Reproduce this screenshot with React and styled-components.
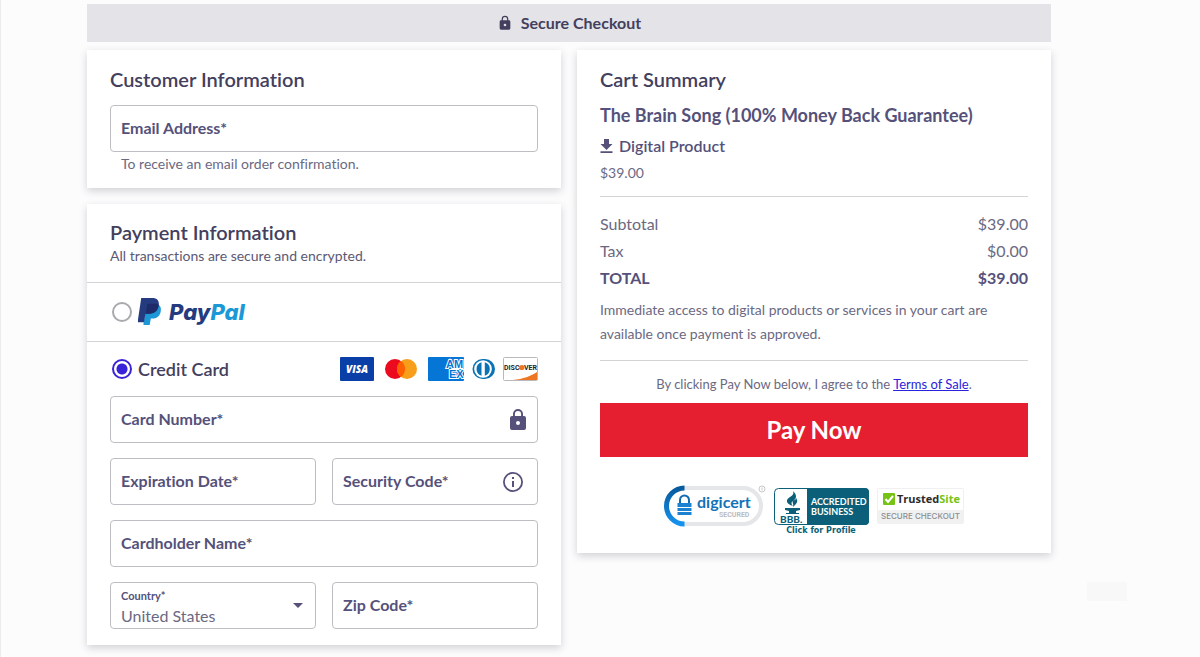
import React, { useState } from 'react';
import styled, { createGlobalStyle, css } from 'styled-components';

const ink = '#43405d';
const body = '#55517a';
const soft = '#6b6982';
const line = '#d4d4d6';
const outline = '#bdbdc2';

const GlobalStyle = createGlobalStyle`
  * { box-sizing: border-box; }
  body {
    margin: 0;
    background: #fcfcfd;
    border-left: 1px solid #ececee;
    color: ${body};
    font-family: Lato, 'Liberation Sans', sans-serif;
    font-size: 16px;
    font-variant-ligatures: none;
  }
  button, input, select { font: inherit; color: inherit; }
  h1, h2, h3, p, dl, dd, fieldset { margin: 0; padding: 0; border: 0; }
`;

const Page = styled.div`
  display: grid;
  grid-template-columns: minmax(0, 1fr);
  gap: 8px;
  padding: 4px 149px 12px 86px;

  @media (max-width: 900px) {
    padding: 4px 16px 12px;
  }
`;

const SecureBar = styled.header`
  display: flex;
  align-items: center;
  justify-content: center;
  gap: 8px;
  height: 38px;
  background: #e3e3e8;
  color: ${ink};

  h1 {
    font-size: 16px;
    line-height: 24px;
    font-weight: 700;
  }
`;

const Columns = styled.main`
  display: grid;
  grid-template-columns: repeat(2, minmax(0, 1fr));
  align-items: start;
  gap: 16px;

  @media (max-width: 760px) {
    grid-template-columns: minmax(0, 1fr);
  }
`;

const Stack = styled.div`
  display: grid;
  gap: 16px;
`;

const Card = styled.section`
  background: #fff;
  box-shadow: 0 3px 8px rgba(40, 40, 60, 0.2);
`;

const CardBody = styled.div`
  padding: ${(p) => p.$padding || '16px 23px'};
`;

const CardTitle = styled.h2`
  color: ${ink};
  font-size: 20px;
  line-height: 26px;
  font-weight: 600;
`;

const Subtitle = styled.p`
  color: #5b5973;
  font-size: 14px;
  line-height: 22px;
`;

const Helper = styled.p`
  margin-top: 1px;
  padding-left: 11px;
  color: ${soft};
  font-size: 14px;
  line-height: 22px;
`;

const Field = styled.div`
  position: relative;
  margin-top: ${(p) => (p.$first ? '13px' : '0')};
`;

const FieldLabel = styled.label`
  position: absolute;
  left: 11px;
  top: ${(p) => (p.$small ? '6px' : '11px')};
  color: ${body};
  font-size: ${(p) => (p.$small ? '11px' : '16px')};
  line-height: ${(p) => (p.$small ? '16px' : '24px')};
  font-weight: 700;
  pointer-events: none;
`;

const control = css`
  display: block;
  width: 100%;
  height: 47px;
  border: 1px solid ${outline};
  border-radius: 4px;
  background: #fff;
  outline-color: #3a22d8;
`;

const TextInput = styled.input`
  ${control}
  padding: 12px 10px;

  &:not(:placeholder-shown) + ${FieldLabel} {
    top: 2px;
    font-size: 11px;
    line-height: 16px;
  }
`;

const Select = styled.select`
  ${control}
  appearance: none;
  padding: 20px 32px 0 10px;
  color: ${soft};
  line-height: 24px;
`;

const FieldIcon = styled.span`
  position: absolute;
  right: ${(p) => p.$right};
  top: 0;
  height: 47px;
  display: flex;
  align-items: center;
  color: ${body};
  pointer-events: none;
`;

const MethodRow = styled.div`
  display: flex;
  align-items: center;
  gap: 6px;
  height: ${(p) => p.$height};
  padding: 0 23px 0 25px;
  border-top: 1px solid ${line};
`;

const MethodLabel = styled.label`
  display: flex;
  align-items: center;
  gap: 6px;
  color: ${ink};
  font-size: 18px;
  line-height: 24px;
  font-weight: 600;
`;

const Radio = styled.input`
  appearance: none;
  width: 20px;
  height: 20px;
  margin: 0;
  border: 2px solid #a9a9ae;
  border-radius: 50%;
  background: #fff;

  &:checked {
    border-color: #3a22d8;
    background: radial-gradient(circle, #3a22d8 5px, #fff 6px);
  }
`;

const CardLogos = styled.div`
  display: flex;
  align-items: center;
  gap: 8px;
  margin-left: auto;
`;

const Fields = styled.div`
  display: grid;
  grid-template-columns: repeat(2, minmax(0, 1fr));
  gap: 15px 16px;
  padding: 0 23px 16px;
`;

const Wide = styled.div`
  grid-column: 1 / -1;
`;

const ProductName = styled.h3`
  margin-top: 10px;
  font-size: 18px;
  line-height: 26px;
  font-weight: 700;
`;

const ProductKind = styled.p`
  display: flex;
  align-items: center;
  gap: 6px;
  margin-top: 6px;
  font-size: 16px;
  line-height: 24px;
  font-weight: 600;
`;

const Price = styled.p`
  margin-top: 3px;
  color: ${soft};
  font-size: 14px;
  line-height: 24px;
`;

const Totals = styled.dl`
  margin-top: 11px;
  padding-top: 13px;
  border-top: 1px solid ${line};
`;

const TotalRow = styled.div`
  display: flex;
  justify-content: space-between;
  color: ${(p) => (p.$strong ? body : soft)};
  font-size: 16px;
  line-height: 27px;
  font-weight: ${(p) => (p.$strong ? 700 : 400)};
`;

const Note = styled.p`
  margin-top: 7px;
  padding-bottom: 14px;
  border-bottom: 1px solid ${line};
  color: ${soft};
  font-size: 14px;
  line-height: 24px;
`;

const Terms = styled.p`
  margin-top: 13px;
  color: ${soft};
  font-size: 13px;
  line-height: 20px;
  text-align: center;

  a { color: #2a22dd; }
`;

const PayButton = styled.button`
  display: block;
  width: 100%;
  height: 54px;
  margin-top: 9px;
  border: 0;
  background: #e61f30;
  color: #fff;
  font-size: 24px;
  line-height: 32px;
  font-weight: 700;
  cursor: pointer;
`;

const Seals = styled.div`
  display: flex;
  justify-content: center;
  align-items: flex-start;
  gap: 8px;
  padding-top: 28px;
`;

const Mark = styled.svg`
  display: block;
  flex: none;
`;

const Ghost = styled.div`
  position: absolute;
  right: 73px;
  top: 582px;
  width: 40px;
  height: 19px;
  background: #f8f8f9;

  @media (max-width: 900px) {
    display: none;
  }
`;

const LockIcon = ({ size }) => (
  <Mark width={size} height={size} viewBox="0 0 24 24" fill="currentColor" aria-hidden="true">
    <path d="M18 8h-1V6A5 5 0 0 0 7 6v2H6a2 2 0 0 0-2 2v10a2 2 0 0 0 2 2h12a2 2 0 0 0 2-2V10a2 2 0 0 0-2-2Zm-6 9a2 2 0 1 1 0-4 2 2 0 0 1 0 4Zm3.100-9H8.900V6a3.100 3.100 0 0 1 6.200 0Z" />
  </Mark>
);

const InfoIcon = () => (
  <Mark width="24" height="24" viewBox="0 0 24 24" fill="currentColor" aria-hidden="true">
    <path d="M11 7h2v2h-2Zm0 4h2v6h-2Zm1-9a10 10 0 1 0 0 20 10 10 0 0 0 0-20Zm0 18.200a8.200 8.200 0 1 1 0-16.400 8.200 8.200 0 0 1 0 16.400Z" />
  </Mark>
);

const CaretIcon = () => (
  <Mark width="10" height="5" viewBox="0 0 10 5" fill="currentColor" aria-hidden="true">
    <path d="M0 0h10L5 5Z" />
  </Mark>
);

const DownloadIcon = () => (
  <Mark width="13" height="16" viewBox="0 0 13 16" fill="currentColor" aria-hidden="true">
    <path d="M4 1h5v5h3.500l-6 6-6-6H4ZM.5 13.200h12V15H.5Z" />
  </Mark>
);

const PayPalLogo = () => (
  <Mark width="113" height="30" viewBox="0 0 113 30" role="img" aria-label="PayPal">
    <path fill="#1d98d7" d="M8 8h13c2.100 1.700 2.300 4.500 1.500 7.400-1.200 4.300-4.100 6-8.200 6h-1.500l-1.100 6.600H5.400Z" />
    <path fill="#253b80" d="M3.200 1h10.600c5 0 7.700 2.200 6.900 7.400-.9 5.800-4.400 8.300-10.100 8.300H7.400L6 25.300H-.4Z" />
    <path fill="#1f2a68" d="M9.300 7.800c.1-.7.600-1 1.200-1h6.800c1.400 0 2.500.3 3.400.8-.5 5.700-4 9.100-10.100 9.100H7.700Z" />
    <text y="23" fontFamily="Inter, sans-serif" fontSize="22" fontWeight="800" fontStyle="italic">
      <tspan x="31" fill="#253b80">Pay</tspan>
      <tspan fill="#1d98d7">Pal</tspan>
    </text>
  </Mark>
);

const VisaLogo = () => (
  <Mark width="34" height="24" viewBox="0 0 34 24" role="img" aria-label="Visa">
    <rect width="34" height="24" rx="1" fill="#0b3fa8" />
    <text x="17" y="16" textAnchor="middle" fill="#fff" fontFamily="'Open Sans', sans-serif" fontSize="10" fontWeight="800" fontStyle="italic">VISA</text>
  </Mark>
);

const MastercardLogo = () => (
  <Mark width="38" height="24" viewBox="0 0 38 24" role="img" aria-label="Mastercard">
    <circle cx="13" cy="12" r="10" fill="#eb0a1e" />
    <circle cx="25" cy="12" r="10" fill="#f79e1b" />
    <path d="M19 4a10 10 0 0 1 0 16 10 10 0 0 1 0-16Z" fill="#ff5f00" />
  </Mark>
);

const AmexLogo = () => (
  <Mark width="36" height="24" viewBox="0 0 36 24" role="img" aria-label="American Express">
    <rect width="36" height="24" rx="1" fill="#0576d5" />
    <g fill="#0576d5" stroke="#fff" strokeWidth="2" paintOrder="stroke" fontFamily="'Liberation Sans', sans-serif" fontSize="11" fontWeight="700">
      <text x="18" y="11">AM</text>
      <text x="21" y="21">EX</text>
    </g>
  </Mark>
);

const DinersLogo = () => (
  <Mark width="23" height="24" viewBox="0 0 23 24" role="img" aria-label="Diners Club">
    <path d="M10.500 2h2.500a10 10 0 0 1 0 20h-2.500a10 10 0 0 1 0-20Z" fill="#0b72b5" />
    <circle cx="11" cy="12" r="8.800" fill="#fff" />
    <path d="M9.500 5.300a7 7 0 0 0 0 13.400ZM12.800 5.300a7 7 0 0 1 0 13.400Z" fill="#0b72b5" />
  </Mark>
);

const DiscoverLogo = () => (
  <Mark width="35" height="24" viewBox="0 0 35 24" role="img" aria-label="Discover">
    <rect x=".5" y=".5" width="34" height="23" rx="1" fill="#fff" stroke="#b9b9bd" />
    <path d="M34 15v8H10c10-1 18-4 24-8Z" fill="#ee7623" />
    <circle cx="18.800" cy="10.500" r="2.600" fill="#ee7623" />
    <g fill="#222" fontFamily="Roboto, sans-serif" fontSize="7" fontWeight="700">
      <text x="1" y="13">DISC</text>
      <text x="34" y="13" textAnchor="end">VER</text>
    </g>
  </Mark>
);

const DigicertSeal = () => (
  <Mark width="102" height="42" viewBox="0 0 102 42" role="img" aria-label="DigiCert Secured">
    <defs>
      <linearGradient id="arc" x1="0" y1="0" x2="0" y2="1">
        <stop offset="0" stopColor="#075b9c" />
        <stop offset="1" stopColor="#1592f0" />
      </linearGradient>
    </defs>
    <path d="M20 3h59a18 18 0 0 1 0 36H20" fill="none" stroke="#e4e6e9" strokeWidth="4" />
    <path d="M20.500 3a18 18 0 0 0 0 36" fill="none" stroke="url(#arc)" strokeWidth="5" />
    <path d="M16 18v-3a4.500 4.500 0 0 1 9 0v3" fill="none" stroke="#126cb0" strokeWidth="2" />
    <path d="M13.500 18h14v4h-14ZM13.500 23h14v3h-14ZM13.500 27h14v3h-14Z" fill="#1b82d2" />
    <text x="33" y="23" fill="#1472b8" fontFamily="Lato, sans-serif" fontSize="16" fontWeight="700">digicert</text>
    <text x="55" y="32" fill="#b9bcc0" fontFamily="Roboto, sans-serif" fontSize="7" fontWeight="700">SECURED</text>
    <circle cx="98" cy="4" r="3" fill="#fff" stroke="#c6c8cb" />
    <path d="M98 2.500v3" stroke="#c6c8cb" />
  </Mark>
);

const BbbSeal = () => (
  <Mark width="95" height="50" viewBox="0 0 95 50" role="img" aria-label="BBB Accredited Business, click for profile">
    <rect x=".5" y="3.500" width="94" height="36" rx="4" fill="#fff" stroke="#0c5f78" />
    <path d="M33 3h58a4 4 0 0 1 4 4v29a4 4 0 0 1-4 4H33Z" fill="#0c5f78" />
    <path d="M19 6c4 4 4 7 0 10-2 1-2 3 0 5-7-2-8-6-3-9 3-2 4-3 3-6ZM22 13c3 4 0 6-3 9 1-3-1-4 0-6 1-1 3-1 3-3ZM11 23h15v2l-4 1v2h3v1H12v-1h3v-2l-4-1Z" fill="#0c5f78" />
    <text x="6" y="38" fill="#0c5f78" fontFamily="Lato, sans-serif" fontSize="10" fontWeight="900">BBB.</text>
    <g fill="#fff" fontFamily="Lato, sans-serif" fontSize="9" fontWeight="700">
      <text x="37" y="20">ACCREDITED</text>
      <text x="37" y="30">BUSINESS</text>
    </g>
    <text x="47" y="48" textAnchor="middle" fill="#0c5f78" fontFamily="'DejaVu Sans', sans-serif" fontSize="8" fontWeight="700">Click for Profile</text>
  </Mark>
);

const TrustedSeal = () => (
  <Mark width="87" height="42" viewBox="0 0 87 42" role="img" aria-label="TrustedSite Secure Checkout">
    <rect x=".5" y="3.500" width="86" height="35" rx="1" fill="#fff" stroke="#f0f0f0" />
    <path d="M1 25h85v13H1Z" fill="#f1f1f1" />
    <rect x="6" y="8" width="12" height="12" rx="1" fill="#76c315" />
    <path d="m8.500 14 2.500 3 5-6" fill="none" stroke="#fff" strokeWidth="2" />
    <text x="20" y="18" fontFamily="'Open Sans', sans-serif" fontSize="11" fontWeight="700">
      <tspan fill="#2b2b2d">Trusted</tspan>
      <tspan fill="#76c315">Site</tspan>
    </text>
    <text x="4" y="34" fill="#8d8d90" fontFamily="Inter, sans-serif" fontSize="8" fontWeight="500">SECURE CHECKOUT</text>
  </Mark>
);

const TextField = ({ id, label, type = 'text', first, children }) => (
  <Field $first={first}>
    <TextInput id={id} type={type} placeholder=" " />
    <FieldLabel htmlFor={id}>{label}</FieldLabel>
    {children}
  </Field>
);

export default function App() {
  const [method, setMethod] = useState('card');

  return (
    <>
      <GlobalStyle />
      <Page>
        <SecureBar>
          <LockIcon size={16} />
          <h1>Secure Checkout</h1>
        </SecureBar>
        <Columns>
          <Stack>
            <Card>
              <CardBody $padding="16px 23px 13px">
                <CardTitle>Customer Information</CardTitle>
                <TextField id="email" type="email" label="Email Address*" first />
                <Helper>To receive an email order confirmation.</Helper>
              </CardBody>
            </Card>
            <Card>
              <CardBody $padding="15px 23px">
                <CardTitle>Payment Information</CardTitle>
                <Subtitle>All transactions are secure and encrypted.</Subtitle>
              </CardBody>
              <MethodRow $height="59px">
                <MethodLabel>
                  <Radio type="radio" name="method" checked={method === 'paypal'} onChange={() => setMethod('paypal')} />
                  <PayPalLogo />
                </MethodLabel>
              </MethodRow>
              <MethodRow $height="55px">
                <MethodLabel>
                  <Radio type="radio" name="method" checked={method === 'card'} onChange={() => setMethod('card')} />
                  Credit Card
                </MethodLabel>
                <CardLogos>
                  <VisaLogo />
                  <MastercardLogo />
                  <AmexLogo />
                  <DinersLogo />
                  <DiscoverLogo />
                </CardLogos>
              </MethodRow>
              <Fields>
                <Wide>
                  <TextField id="number" label="Card Number*">
                    <FieldIcon $right="8px"><LockIcon size={24} /></FieldIcon>
                  </TextField>
                </Wide>
                <TextField id="expiry" label="Expiration Date*" />
                <TextField id="cvc" label="Security Code*">
                  <FieldIcon $right="13px"><InfoIcon /></FieldIcon>
                </TextField>
                <Wide>
                  <TextField id="holder" label="Cardholder Name*" />
                </Wide>
                <Field>
                  <Select id="country" defaultValue="US">
                    <option value="US">United States</option>
                  </Select>
                  <FieldLabel htmlFor="country" $small>Country*</FieldLabel>
                  <FieldIcon $right="13px"><CaretIcon /></FieldIcon>
                </Field>
                <TextField id="zip" label="Zip Code*" />
              </Fields>
            </Card>
          </Stack>
          <Card>
            <CardBody $padding="16px 23px 18px">
              <CardTitle>Cart Summary</CardTitle>
              <ProductName>The Brain Song (100% Money Back Guarantee)</ProductName>
              <ProductKind><DownloadIcon />Digital Product</ProductKind>
              <Price>$39.00</Price>
              <Totals>
                <TotalRow><dt>Subtotal</dt><dd>$39.00</dd></TotalRow>
                <TotalRow><dt>Tax</dt><dd>$0.00</dd></TotalRow>
                <TotalRow $strong><dt>TOTAL</dt><dd>$39.00</dd></TotalRow>
              </Totals>
              <Note>
                Immediate access to digital products or services in your cart are available once payment is approved.
              </Note>
              <Terms>By clicking Pay Now below, I agree to the <a href="#terms">Terms of Sale</a>.</Terms>
              <PayButton type="button">Pay Now</PayButton>
              <Seals>
                <DigicertSeal />
                <BbbSeal />
                <TrustedSeal />
              </Seals>
            </CardBody>
          </Card>
        </Columns>
      </Page>
      <Ghost />
    </>
  );
}
